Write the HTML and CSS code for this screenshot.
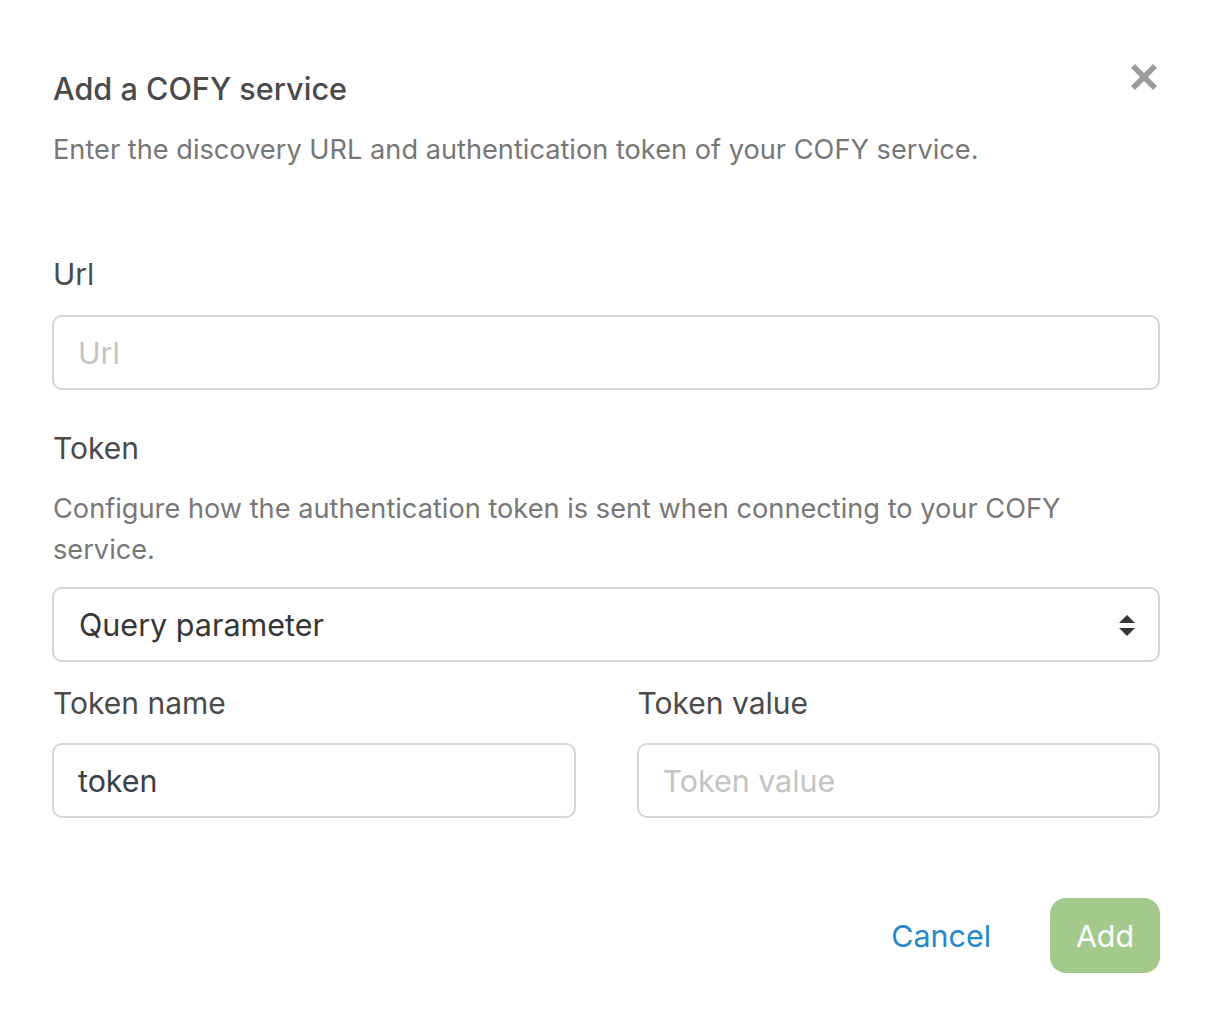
FILE: index.html
```html
<!DOCTYPE html>
<html lang="en">
<head>
<meta charset="utf-8">
<title>Add a COFY service</title>
<link rel="stylesheet" href="styles.css">
</head>
<body>
<div class="modal">
  <div class="modal-head">
    <h1 class="modal-title">Add a COFY service</h1>
    <button class="close" type="button" aria-label="Close">
      <svg width="28" height="28" viewBox="0 0 28 28"><path d="M3 3 L25 25 M25 3 L3 25" stroke="#9b9b9b" stroke-width="5.5" stroke-linecap="butt"/></svg>
    </button>
  </div>
  <p class="subtitle">Enter the discovery URL and authentication token of your COFY service.</p>

  <div class="field field-url">
    <label class="label">Url</label>
    <input class="input" type="text" placeholder="Url">
  </div>

  <div class="field field-token">
    <label class="label">Token</label>
    <p class="help">Configure how the authentication token is sent when connecting to your COFY service.</p>
    <div class="select">
      <span class="select-value">Query parameter</span>
      <svg class="select-arrows" width="16" height="22" viewBox="0 0 16 22"><path d="M8 0 L16 8 L0 8 Z M0 13 L16 13 L8 21 Z" fill="#363636"/></svg>
    </div>
  </div>

  <div class="columns">
    <div class="field">
      <label class="label">Token name</label>
      <input class="input input-filled" type="text" value="token">
    </div>
    <div class="field">
      <label class="label">Token value</label>
      <input class="input" type="text" placeholder="Token value">
    </div>
  </div>

  <div class="modal-foot">
    <a class="cancel" href="#">Cancel</a>
    <button class="add" type="button">Add</button>
  </div>
</div>
</body>
</html>
```

FILE: styles.css
```css
* { box-sizing: border-box; }
html, body { margin: 0; padding: 0; background: #ffffff; }
body { font-family: Inter, "Liberation Sans", sans-serif; }

.modal {
  width: 1210px;
  padding: 69px 50px 0 52px;
}

.modal-head {
  display: flex;
  justify-content: space-between;
  align-items: flex-start;
}
.modal-title {
  margin: 0;
  font-size: 30.6px;
  line-height: 40px;
  font-weight: 500;
  color: #4a4a4a;
  padding-left: 1px;
}
.close {
  margin: -6px 2px 0 0;
  padding: 0;
  border: 0;
  background: none;
  width: 28px;
  height: 28px;
  display: block;
}
.close svg { display: block; }

.subtitle {
  margin: 20px 0 0 1px;
  font-size: 27.2px;
  line-height: 42px;
  color: #777777;
}

.field { display: flex; flex-direction: column; }
.field-url { margin-top: 82px; }
.field-token { margin-top: 37px; }

.label {
  font-size: 30px;
  line-height: 42px;
  color: #4a4a4a;
  padding-left: 1px;
  margin-bottom: 20px;
}
.field-token .label { margin-bottom: 0; }

.input {
  height: 75px;
  width: 100%;
  border: 2px solid #d3d6da;
  border-radius: 10px;
  padding: 0 24px;
  font-family: inherit;
  font-size: 30.4px;
  color: #363636;
  background: #fff;
  outline: none;
}
.input::placeholder { color: #c4c4c4; }
.input-filled { color: #3a3f46; }

.help {
  margin: 19px 0 0 1px;
  font-size: 27.2px;
  line-height: 41px;
  color: #777777;
}

.select {
  margin-top: 17px;
  height: 75px;
  border: 2px solid #d3d6da;
  border-radius: 10px;
  display: flex;
  align-items: center;
  justify-content: space-between;
  padding: 0 23px 0 25px;
}
.select-value {
  font-size: 30.5px;
  color: #363636;
}
.select-arrows { display: block; margin-top: 2px; }

.columns {
  margin-top: 20px;
  display: grid;
  grid-template-columns: 1fr 1fr;
  column-gap: 61px;
}
.columns .label { margin-bottom: 19px; }

.modal-foot {
  margin-top: 80px;
  display: flex;
  justify-content: flex-end;
  align-items: center;
  gap: 59px;
}
.cancel {
  font-size: 30.4px;
  color: #2588c9;
  text-decoration: none;
}
.add {
  width: 110px;
  height: 75px;
  border: 0;
  border-radius: 16px;
  background: #a3c98c;
  color: #ffffff;
  font-family: inherit;
  font-size: 30.4px;
  padding: 0;
}
```
